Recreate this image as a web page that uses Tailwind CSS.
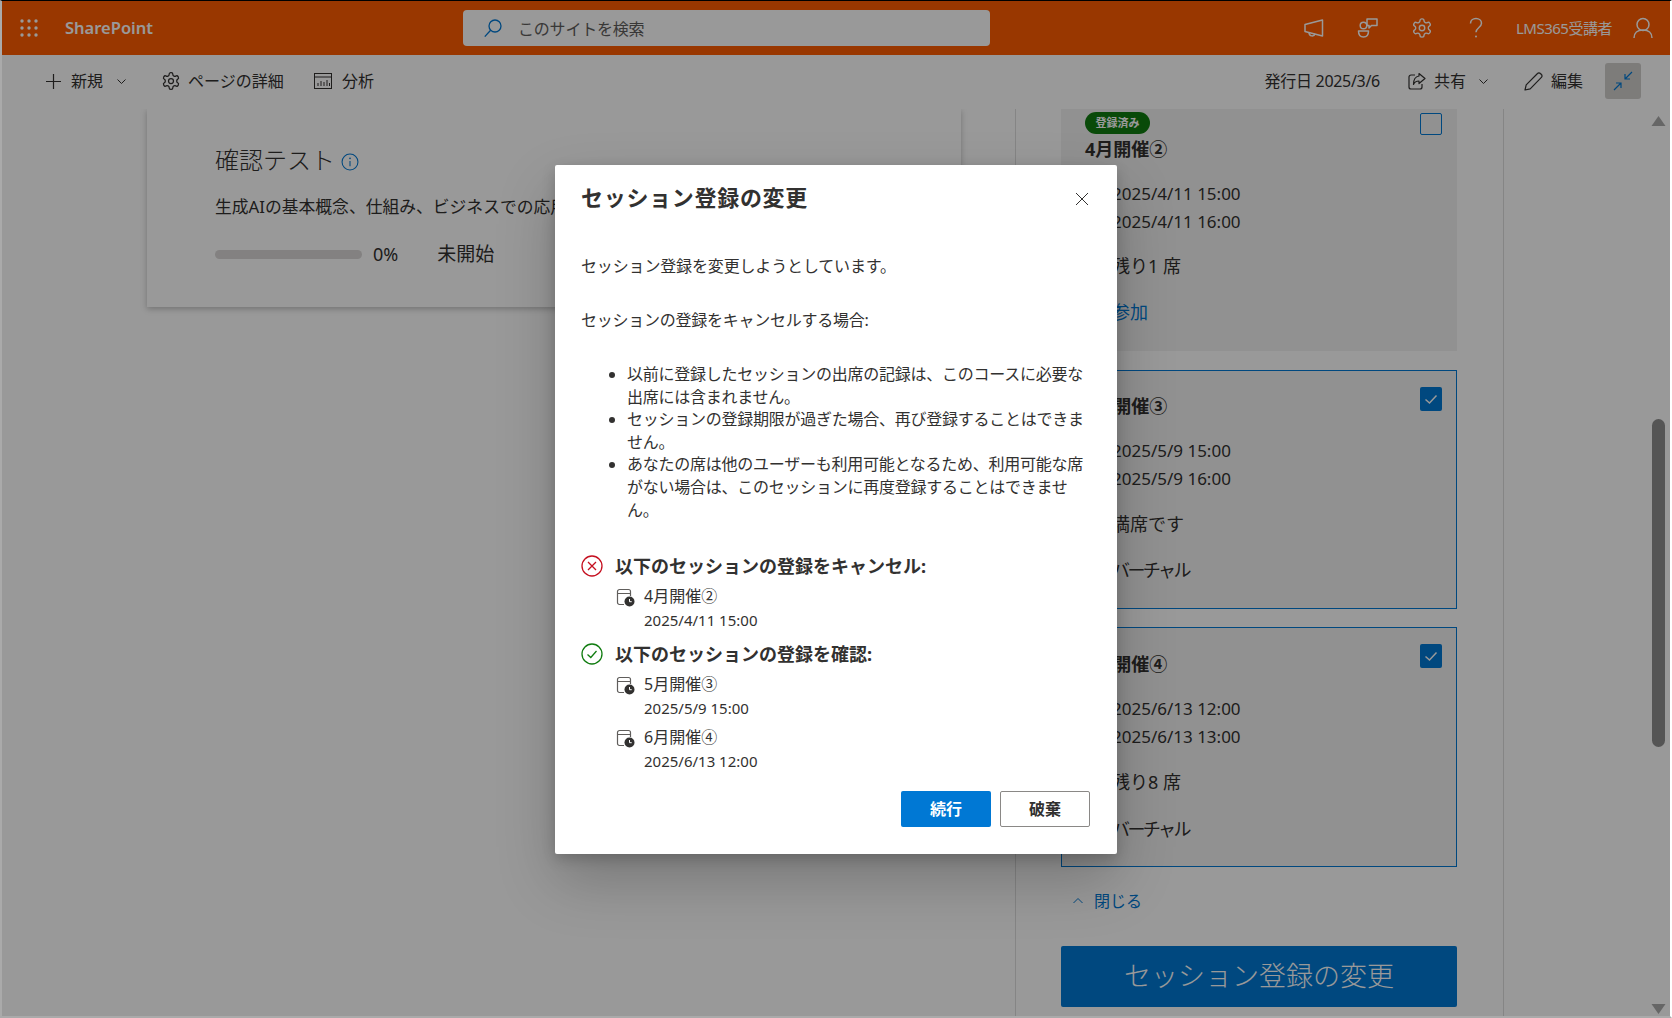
<!DOCTYPE html><html lang="ja">
<head>
  <meta charset="UTF-8">
  <meta name="viewport" content="width=device-width, initial-scale=1.0">
  <title>SharePoint セッション登録の変更</title>
  <script src="https://cdn.jsdelivr.net/npm/@tailwindcss/browser@4"></script>
</head>
<body class="font-['Noto_Sans','Noto_Sans_CJK_JP',sans-serif] text-[#323130] bg-white overflow-hidden">
<div class="relative w-[1672px] h-[1018px] overflow-hidden flex flex-col border-t border-t-black border-l-2 border-l-[#aaaaaa] border-r-2 border-r-white border-b-2 border-b-[#aaaaaa]">

  <!-- suite bar -->
  <header class="relative z-10 h-[54px] shrink-0 bg-[#ff5d00] flex items-center text-white">
    <div class="w-[461px] flex items-center">
      <svg class="ml-[17px] w-5 h-5" viewBox="0 0 20 20" fill="currentColor">
        <circle cx="3" cy="3" r="1.7"/><circle cx="10" cy="3" r="1.7"/><circle cx="17" cy="3" r="1.7"/>
        <circle cx="3" cy="10" r="1.7"/><circle cx="10" cy="10" r="1.7"/><circle cx="17" cy="10" r="1.7"/>
        <circle cx="3" cy="17" r="1.7"/><circle cx="10" cy="17" r="1.7"/><circle cx="17" cy="17" r="1.7"/>
      </svg>
      <span class="ml-[26px] mt-[1px] text-[16.5px] font-semibold leading-none">SharePoint</span>
    </div>
    <div class="w-[527px] h-[36px] rounded-[4px] bg-white flex items-center">
      <svg class="ml-[20px] w-5 h-5 text-[#0078d4]" viewBox="0 0 20 20" fill="none" stroke="currentColor" stroke-width="1.3">
        <circle cx="12" cy="8" r="6"/><path d="M7.6 12.2 1.8 18.6"/>
      </svg>
      <span class="ml-[15px] mt-[1px] text-[16px] text-[#605e5c] tracking-[-0.2px]">このサイトを検索</span>
    </div>
    <div class="flex-1 flex items-center justify-end">
      <div class="w-[54px] flex justify-center">
        <svg class="w-[22px] h-[22px]" viewBox="0 0 22 22" fill="none" stroke="currentColor" stroke-width="1.5" stroke-linejoin="round">
          <path d="M2 7.5 19.5 3v16L2 14.5z"/><path d="M6 15.5c0 4 5 4.6 6 1.2"/>
        </svg>
      </div>
      <div class="w-[54px] flex justify-center">
        <svg class="w-[22px] h-[22px]" viewBox="0 0 22 22" fill="none" stroke="currentColor" stroke-width="1.5" stroke-linejoin="round">
          <circle cx="6.5" cy="8.5" r="3.3"/><path d="M1.5 14h10c0 4.500-2 6-5 6s-5-1.500-5-6z"/><path d="M10 2h10v6.500h-5.500L12 11V8.500h-2z"/>
        </svg>
      </div>
      <div class="w-[54px] flex justify-center">
        <svg class="w-[22px] h-[22px]" viewBox="0 0 24 24" fill="none" stroke="currentColor" stroke-width="1.500">
          <path d="M12.220 2h-.44a2 2 0 0 0-2 2v.18a2 2 0 0 1-1 1.730l-.43.25a2 2 0 0 1-2 0l-.15-.08a2 2 0 0 0-2.730.73l-.22.38a2 2 0 0 0 .73 2.730l.15.1a2 2 0 0 1 1 1.720v.51a2 2 0 0 1-1 1.740l-.15.09a2 2 0 0 0-.73 2.730l.22.38a2 2 0 0 0 2.730.73l.15-.08a2 2 0 0 1 2 0l.43.25a2 2 0 0 1 1 1.730V20a2 2 0 0 0 2 2h.44a2 2 0 0 0 2-2v-.18a2 2 0 0 1 1-1.730l.43-.25a2 2 0 0 1 2 0l.15.08a2 2 0 0 0 2.730-.73l.22-.39a2 2 0 0 0-.73-2.730l-.15-.08a2 2 0 0 1-1-1.740v-.5a2 2 0 0 1 1-1.740l.15-.09a2 2 0 0 0 .73-2.730l-.22-.38a2 2 0 0 0-2.730-.73l-.15.08a2 2 0 0 1-2 0l-.43-.25a2 2 0 0 1-1-1.730V4a2 2 0 0 0-2-2z"/><circle cx="12" cy="12" r="3"/>
        </svg>
      </div>
      <div class="w-[54px] flex justify-center">
        <svg class="w-[22px] h-[22px]" viewBox="0 0 22 22" fill="none" stroke="currentColor" stroke-width="1.500">
          <path d="M5.500 6.500C5.500 3.500 8 1.500 11 1.500s5.500 2 5.500 4.800c0 4-5.500 4.400-5.500 9"/><circle cx="11" cy="19.500" r="1" fill="currentColor" stroke="none"/>
        </svg>
      </div>
      <span class="ml-[13px] w-[100px] text-[15px] whitespace-nowrap tracking-[-0.5px]">LMS365受講者</span>
      <div class="w-[54px] flex justify-center">
        <svg class="w-[22px] h-[22px]" viewBox="0 0 22 22" fill="none" stroke="currentColor" stroke-width="1.500">
          <circle cx="11" cy="7.500" r="6"/><path d="M2 21c0-5 3.500-8 9-8s9 3 9 8"/>
        </svg>
      </div>
    </div>
  </header>

  <!-- command bar -->
  <nav class="relative z-10 h-[54px] shrink-0 pb-[2px] bg-white flex items-center text-[16px] text-[#323130]">
    <svg class="ml-[44px] w-[15px] h-[15px]" viewBox="0 0 15 15" fill="none" stroke="currentColor" stroke-width="1.200"><path d="M7.500 0v15M0 7.500h15"/></svg>
    <span class="ml-[10px]">新規</span>
    <svg class="ml-[14px] w-[9px] h-[9px]" viewBox="0 0 9 9" fill="none" stroke="currentColor"><path d="M.5 2.500 4.500 6.500 8.500 2.500"/></svg>
    <svg class="ml-[35px] w-[20px] h-[20px]" viewBox="0 0 24 24" fill="none" stroke="currentColor" stroke-width="1.500">
      <path d="M12.220 2h-.44a2 2 0 0 0-2 2v.18a2 2 0 0 1-1 1.730l-.43.25a2 2 0 0 1-2 0l-.15-.08a2 2 0 0 0-2.730.73l-.22.38a2 2 0 0 0 .73 2.730l.15.1a2 2 0 0 1 1 1.720v.51a2 2 0 0 1-1 1.740l-.15.09a2 2 0 0 0-.73 2.730l.22.38a2 2 0 0 0 2.730.73l.15-.08a2 2 0 0 1 2 0l.43.25a2 2 0 0 1 1 1.730V20a2 2 0 0 0 2 2h.44a2 2 0 0 0 2-2v-.18a2 2 0 0 1 1-1.730l.43-.25a2 2 0 0 1 2 0l.15.08a2 2 0 0 0 2.730-.73l.22-.39a2 2 0 0 0-.73-2.730l-.15-.08a2 2 0 0 1-1-1.740v-.5a2 2 0 0 1 1-1.740l.15-.09a2 2 0 0 0 .73-2.730l-.22-.38a2 2 0 0 0-2.730-.73l-.15.08a2 2 0 0 1-2 0l-.43-.25a2 2 0 0 1-1-1.730V4a2 2 0 0 0-2-2z"/><circle cx="12" cy="12" r="3"/>
    </svg>
    <span class="ml-[7px] w-[96px] whitespace-nowrap">ページの詳細</span>
    <svg class="ml-[30px] w-[18px] h-[16px]" viewBox="0 0 18 16" fill="none" stroke="currentColor"><rect x=".5" y=".5" width="17" height="15"/><path d="M.5 4h17M4 13v-3M7 13V8M10 13v-4M13 13V7M15.500 13v-3"/></svg>
    <span class="ml-[10px]">分析</span>
    <div class="ml-auto flex items-center">
      <span class="whitespace-nowrap tracking-[-0.3px]">発行日 2025/3/6</span>
      <svg class="ml-[28px] w-[18px] h-[18px]" viewBox="0 0 18 18" fill="none" stroke="currentColor" stroke-width="1.200" stroke-linejoin="round"><path d="M7 3H3a2 2 0 0 0-2 2v10a2 2 0 0 0 2 2h9a2 2 0 0 0 2-2v-3"/><path d="M11 1.500 17 6.500l-6 5V9c-3 0-4.500 1-5.500 3.500C5.500 8 7.500 4.500 11 4z"/></svg>
      <span class="ml-[8px]">共有</span>
      <svg class="ml-[13px] w-[9px] h-[9px]" viewBox="0 0 9 9" fill="none" stroke="currentColor"><path d="M.5 2.500 4.500 6.500 8.500 2.500"/></svg>
      <svg class="ml-[36px] w-[19px] h-[19px]" viewBox="0 0 19 19" fill="none" stroke="currentColor" stroke-width="1.200" stroke-linejoin="round"><path d="M1 18l1.200-5.200L13.500 1.500a2 2 0 0 1 2.900 0l1 1a2 2 0 0 1 0 2.900L6.200 16.800z"/></svg>
      <span class="ml-[8px]">編集</span>
      <div class="ml-[22px] mr-[29px] w-[36px] h-[36px] rounded-[3px] bg-[#d1cfcc] flex items-center justify-center">
        <svg class="w-[20px] h-[20px] text-[#0078d4]" viewBox="0 0 20 20" fill="none" stroke="currentColor" stroke-width="1.200"><path d="M19 1 12 8M12 3v5h5M1 19l7-7M3 12h5v5"/></svg>
      </div>
    </div>
  </nav>

  <!-- page body -->
  <div class="flex-1 flex min-h-0">
    <div class="w-[1013px] shrink-0 bg-white">
      <section class="ml-[145px] w-[814px] h-[198px] bg-white shadow-[0_2px_6px_rgba(0,0,0,0.25)] pl-[68px] overflow-hidden whitespace-nowrap">
        <div class="mt-[34px] flex items-center">
          <h2 class="text-[24px] leading-[34px] font-light text-[#323130]">確認テスト</h2>
          <svg class="ml-[6px] mt-[3px] w-[18px] h-[18px] text-[#0078d4]" viewBox="0 0 17 17" fill="none" stroke="currentColor"><circle cx="8.500" cy="8.500" r="7.500"/><path d="M8.500 7.500v5"/><circle cx="8.500" cy="5" r=".8" fill="currentColor" stroke="none"/></svg>
        </div>
        <p class="mt-[18px] text-[16.8px] leading-[24px]">生成AIの基本概念、仕組み、ビジネスでの応用</p>
        <div class="mt-[21px] flex items-center h-[28px]">
          <div class="w-[147px] h-[9px] rounded-full bg-[#dad8d7]"></div>
          <span class="ml-[11px] text-[18px]">0%</span>
          <span class="ml-[39px] text-[19px]">未開始</span>
        </div>
      </section>
    </div>

    <!-- session panel -->
    <aside class="w-[489px] shrink-0 bg-white border-x border-[#dedede] pl-[45px] pr-[46px] flex flex-col">
      <article class="relative h-[242px] bg-[#f2f2f2] pl-[24px] overflow-hidden">
        <span class="mt-[-1px] inline-flex items-center justify-center w-[65px] h-[22px] rounded-full bg-[#107c10] text-white text-[11px] font-bold">登録済み</span>
        <h3 class="mt-[3px] text-[18px] leading-[24px] font-bold">4月開催②</h3>
        <div class="mt-[19px] pl-[27px] text-[17px] leading-[28px] text-[#323130]">
          <div>2025/4/11 15:00</div>
          <div>2025/4/11 16:00</div>
          <div class="mt-[18px] text-[18px] leading-[24px]">残り1 席</div>
          <div class="mt-[22px] text-[18px] leading-[24px] text-[#0078d4]">参加</div>
        </div>
        <span class="absolute top-[4px] right-[15px] w-[22px] h-[22px] rounded-[2px] border border-[#0078d4]"></span>
      </article>

      <article class="relative mt-[19px] h-[239px] bg-[#f2f2f2] border border-[#0078d4] pl-[23px]">
        <h3 class="mt-[23px] text-[18px] leading-[24px] font-bold">5月開催③</h3>
        <div class="mt-[19px] pl-[27px] text-[17px] leading-[28px]">
          <div>2025/5/9 15:00</div>
          <div>2025/5/9 16:00</div>
          <div class="mt-[19px] text-[18px] leading-[24px]">満席です</div>
          <div class="mt-[22px] text-[18px] leading-[24px] tracking-[-2.6px]">バーチャル</div>
        </div>
        <span class="absolute top-[16px] right-[14px] w-[22px] h-[24px] rounded-[2px] bg-[#0078d4] flex items-center justify-center">
          <svg class="w-[14px] h-[14px] text-white" viewBox="0 0 14 14" fill="none" stroke="currentColor" stroke-width="1.500"><path d="M1.500 7.500 5.500 11 12.500 3.500"/></svg>
        </span>
      </article>

      <article class="relative mt-[18px] h-[240px] bg-[#f2f2f2] border border-[#0078d4] pl-[23px]">
        <h3 class="mt-[24px] text-[18px] leading-[24px] font-bold">6月開催④</h3>
        <div class="mt-[19px] pl-[27px] text-[17px] leading-[28px]">
          <div>2025/6/13 12:00</div>
          <div>2025/6/13 13:00</div>
          <div class="mt-[19px] text-[18px] leading-[24px]">残り8 席</div>
          <div class="mt-[23px] text-[18px] leading-[24px] tracking-[-2.6px]">バーチャル</div>
        </div>
        <span class="absolute top-[16px] right-[14px] w-[22px] h-[24px] rounded-[2px] bg-[#0078d4] flex items-center justify-center">
          <svg class="w-[14px] h-[14px] text-white" viewBox="0 0 14 14" fill="none" stroke="currentColor" stroke-width="1.500"><path d="M1.500 7.500 5.500 11 12.500 3.500"/></svg>
        </span>
      </article>

      <div class="mt-[22px] h-[24px] flex items-center text-[16px] text-[#0078d4]">
        <svg class="ml-[12px] w-[10px] h-[10px]" viewBox="0 0 10 10" fill="none" stroke="currentColor"><path d="M.5 7 5 2.500 9.500 7"/></svg>
        <span class="ml-[11px]">閉じる</span>
      </div>
      <button class="mt-[33px] h-[61px] rounded-[2px] bg-[#0078d4] text-white text-[27px] font-light">セッション登録の変更</button>
    </aside>

    <div class="flex-1 relative bg-white">
      <!-- scrollbar -->
      <svg class="absolute top-[6px] right-[4px] w-[15px] h-[12px] text-[#aaaaaa]" viewBox="0 0 14 12" fill="currentColor"><path d="M7 1 14 11H0z"/></svg>
      <div class="absolute top-[310px] right-[5px] w-[13px] h-[328px] rounded-full bg-[#8e8e8e]"></div>
      <svg class="absolute bottom-[1px] right-[4px] w-[15px] h-[12px] text-[#aaaaaa]" viewBox="0 0 14 12" fill="currentColor"><path d="M7 11 14 1H0z"/></svg>
    </div>
  </div>

  <!-- dim layer and dialog -->
  <div class="absolute inset-0 z-20 bg-black/40"></div>
  <div class="absolute z-30 left-[553px] top-[164px] w-[562px] h-[689px] bg-white rounded-[2px] shadow-[0_26px_58px_rgba(0,0,0,0.22),0_5px_14px_rgba(0,0,0,0.18)] pl-[26px] pr-[27px] text-[16px] text-[#323130]">
    <div class="pt-[17px] flex items-center justify-between">
      <h1 class="text-[22px] leading-[30px] font-bold tracking-[0.7px]">セッション登録の変更</h1>
      <svg class="mt-[4px] mr-[1px] w-[14px] h-[14px]" viewBox="0 0 14 14" fill="none" stroke="currentColor"><path d="M1 1 13 13M13 1 1 13"/></svg>
    </div>
    <p class="mt-[43px] leading-[23px] tracking-[-0.15px]">セッション登録を変更しようとしています。</p>
    <p class="mt-[31px] leading-[23px] tracking-[-0.25px]">セッションの登録をキャンセルする場合:</p>
    <ul class="mt-[31px] ml-[46px] list-disc leading-[22.6px] tracking-[-0.25px]">
      <li>以前に登録したセッションの出席の記録は、このコースに必要な出席には含まれません。</li>
      <li>セッションの登録期限が過ぎた場合、再び登録することはできません。</li>
      <li>あなたの席は他のユーザーも利用可能となるため、利用可能な席がない場合は、このセッションに再度登録することはできません。</li>
    </ul>

    <div class="mt-[33px] flex items-center h-[24px]">
      <svg class="w-[22px] h-[22px] text-[#c50f1f]" viewBox="0 0 22 22" fill="none" stroke="currentColor" stroke-width="1.300"><circle cx="11" cy="11" r="10"/><path d="M7 7 15 15M15 7 7 15"/></svg>
      <h2 class="ml-[12px] text-[18px] font-bold">以下のセッションの登録をキャンセル:</h2>
    </div>
    <div class="mt-[6px] ml-[35px] flex">
      <svg class="mt-[4px] w-[19px] h-[19px] shrink-0 text-[#605e5c]" viewBox="0 0 19 19"><path d="M8 16.500H3.500A2 2 0 0 1 1.500 14.500V3.500a2 2 0 0 1 2-2h9a2 2 0 0 1 2 2V8M1.500 5.500h13" fill="none" stroke="currentColor" stroke-width="1.200"/><circle cx="13.500" cy="13.500" r="5" fill="#323130"/><path d="M13.500 11v2.700h2.200" fill="none" stroke="#fff"/></svg>
      <div class="ml-[9px] leading-[24px]"><div>4月開催②</div><div class="text-[15px]">2025/4/11 15:00</div></div>
    </div>
    <div class="mt-[10px] flex items-center h-[24px]">
      <svg class="w-[22px] h-[22px] text-[#107c10]" viewBox="0 0 22 22" fill="none" stroke="currentColor" stroke-width="1.300"><circle cx="11" cy="11" r="10"/><path d="M6.500 11.500 9.800 14.500 15.500 8"/></svg>
      <h2 class="ml-[12px] text-[18px] font-bold">以下のセッションの登録を確認:</h2>
    </div>
    <div class="mt-[6px] ml-[35px] flex">
      <svg class="mt-[4px] w-[19px] h-[19px] shrink-0 text-[#605e5c]" viewBox="0 0 19 19"><path d="M8 16.500H3.500A2 2 0 0 1 1.500 14.500V3.500a2 2 0 0 1 2-2h9a2 2 0 0 1 2 2V8M1.500 5.500h13" fill="none" stroke="currentColor" stroke-width="1.200"/><circle cx="13.500" cy="13.500" r="5" fill="#323130"/><path d="M13.500 11v2.700h2.200" fill="none" stroke="#fff"/></svg>
      <div class="ml-[9px] leading-[24px]"><div>5月開催③</div><div class="text-[15px]">2025/5/9 15:00</div></div>
    </div>
    <div class="mt-[5px] ml-[35px] flex">
      <svg class="mt-[4px] w-[19px] h-[19px] shrink-0 text-[#605e5c]" viewBox="0 0 19 19"><path d="M8 16.500H3.500A2 2 0 0 1 1.500 14.500V3.500a2 2 0 0 1 2-2h9a2 2 0 0 1 2 2V8M1.500 5.500h13" fill="none" stroke="currentColor" stroke-width="1.200"/><circle cx="13.500" cy="13.500" r="5" fill="#323130"/><path d="M13.500 11v2.700h2.200" fill="none" stroke="#fff"/></svg>
      <div class="ml-[9px] leading-[24px]"><div>6月開催④</div><div class="text-[15px]">2025/6/13 12:00</div></div>
    </div>

    <div class="mt-[18px] flex justify-end gap-[9px]">
      <button class="w-[90px] h-[36px] rounded-[2px] bg-[#0078d4] text-white font-bold">続行</button>
      <button class="w-[90px] h-[36px] rounded-[2px] border border-[#8a8886] bg-white font-bold">破棄</button>
    </div>
  </div>
</div>
</body>
</html>
